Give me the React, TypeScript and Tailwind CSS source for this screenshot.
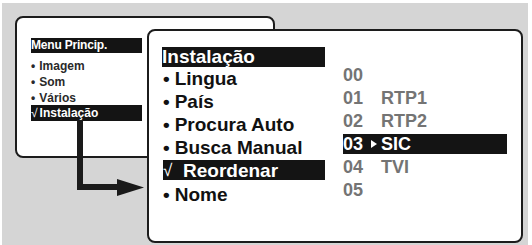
import React from 'react';

const font = { fontFamily: '"Liberation Sans", Arial, Helvetica, sans-serif' };

const smallItems = ['Imagem', 'Som', 'Vários'];
const bigItems = ['Lingua', 'País', 'Procura Auto', 'Busca Manual'];
const channels = [
  { n: '00', name: '' },
  { n: '01', name: 'RTP1' },
  { n: '02', name: 'RTP2' },
  { n: '03', name: 'SIC', active: true },
  { n: '04', name: 'TVI' },
  { n: '05', name: '' },
];

const MainMenu: React.FC = () => (
  <div className="absolute left-[13px] top-[13px] w-[260px] h-[142px] bg-white border-2 border-[#1c1c1c] rounded-[8px] pl-[14px] pt-[20px]">
    <div className="w-[111px] h-[15px] bg-[#141414] text-white text-[12px] font-bold leading-[15px] tracking-[-0.2px]">
      Menu Princip.
    </div>
    <div className="mt-[5px] text-[12px] font-bold text-[#2a2a2a]">
      {smallItems.map((item, i) => (
        <div key={item} className={`flex items-center gap-[4px] ${i === 2 ? 'h-[15px]' : 'h-[16px]'}`}>
          <span>•</span>
          <span>{item}</span>
        </div>
      ))}
      <div className="w-[111px] h-[16px] bg-[#141414] text-white flex items-center gap-[2px] leading-[16px]">
        <span className="font-normal">√</span>
        <span>Instalação</span>
      </div>
    </div>
  </div>
);

const InstallMenu: React.FC = () => (
  <div className="absolute left-[145px] top-[26px] w-[376px] h-[214px] bg-white border-2 border-[#1c1c1c] rounded-[8px] pl-[14px] pt-[16px] flex">
    <div className="w-[162px] text-[19px] font-bold text-[#111]">
      <div className="h-[20px] bg-[#141414] text-white leading-[20px] -ml-[1px]">Instalação</div>
      {bigItems.map((item) => (
        <div key={item} className="h-[23px] flex items-center gap-[5px] leading-none">
          <span>•</span>
          <span>{item}</span>
        </div>
      ))}
      <div className="h-[23px]">
        <div className="h-[20px] mt-[1px] bg-[#141414] text-white flex items-center leading-none">
          <span className="font-normal text-[17px] w-[20px]">√</span>
          <span>Reordenar</span>
        </div>
      </div>
      <div className="h-[23px] flex items-center gap-[5px] leading-none">
        <span>•</span>
        <span>Nome</span>
      </div>
    </div>
    <div className="ml-[18px] mt-[16px] w-[164px] text-[18px] font-bold text-[#747474]">
      {channels.map((c) => (
        <div key={c.n} className="h-[23px] flex items-center">
          <div className={`w-full h-[20px] flex items-center leading-none ${c.active ? 'bg-[#141414] text-white' : ''}`}>
            <span className="w-[28px]">{c.n}</span>
            <span className="w-[10px] flex items-center">
              {c.active && (
                <svg width="6" height="8" viewBox="0 0 6 8">
                  <path d="M0 0 L6 4 L0 8 Z" fill="#fff" />
                </svg>
              )}
            </span>
            <span>{c.name}</span>
          </div>
        </div>
      ))}
    </div>
  </div>
);

const Arrow: React.FC = () => (
  <svg className="absolute left-0 top-0" width="160" height="200" viewBox="0 0 160 200">
    <path d="M78 117 V184 H117" fill="none" stroke="#1a1a1a" strokeWidth="6" strokeLinejoin="miter" />
    <path d="M115 176 L142 184.5 L115 193 Z" fill="#1a1a1a" />
  </svg>
);

export default function App() {
  return (
    <div className="w-[532px] h-[245px] bg-white pl-[2px] pt-[3px] pr-[4px]" style={font}>
      <div className="relative w-full h-full bg-[#d5d5d5] overflow-hidden">
        <MainMenu />
        <Arrow />
        <InstallMenu />
      </div>
    </div>
  );
}
